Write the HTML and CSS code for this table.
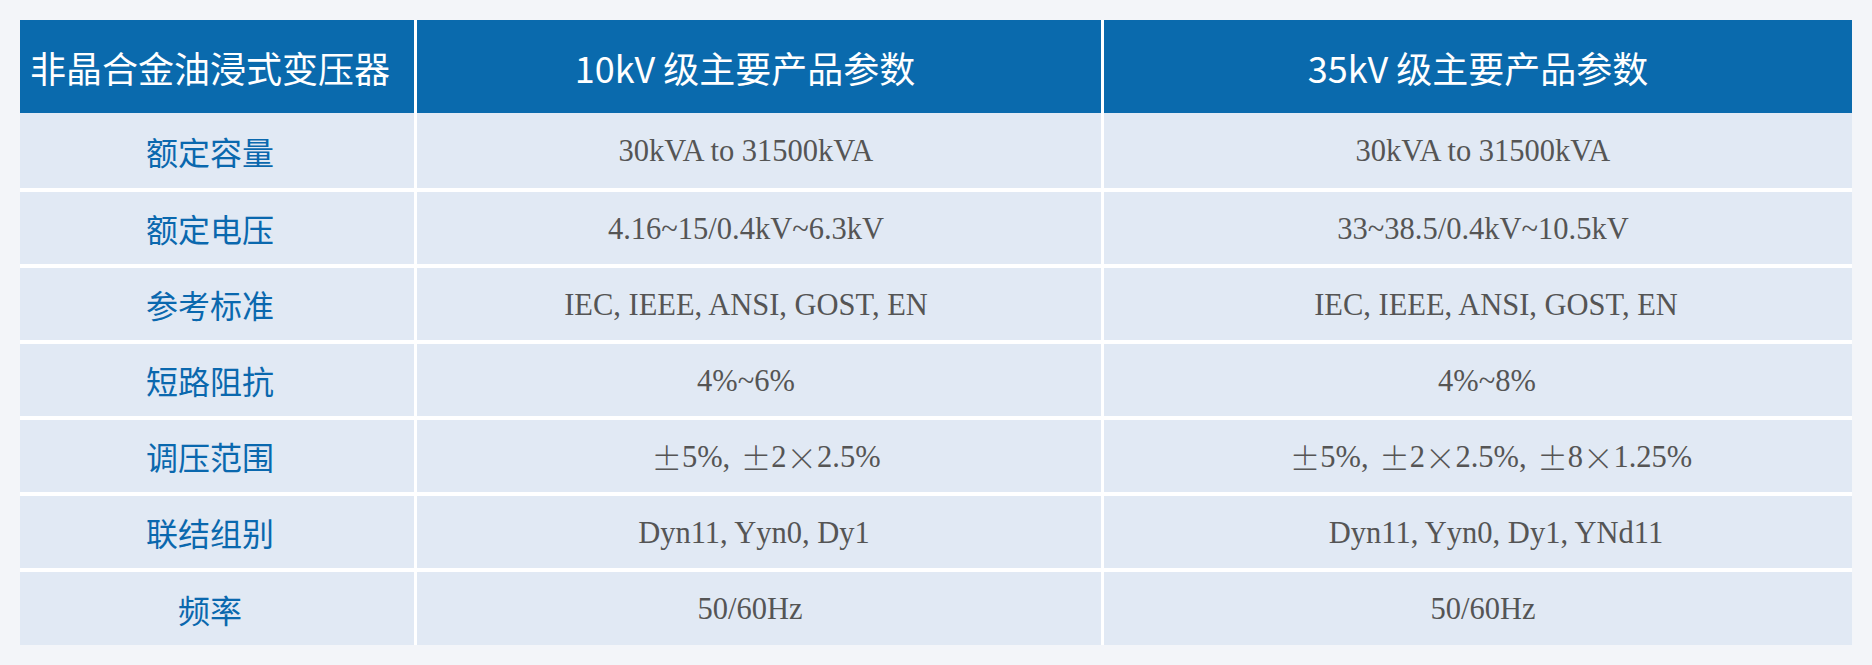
FILE: index.html
```html
<!DOCTYPE html>
<html lang="zh-CN">
<head>
<meta charset="utf-8">
<title>非晶合金油浸式变压器</title>
<link rel="stylesheet" href="styles.css">
</head>
<body>
<div class="page">
  <div class="table">
    <div class="row head">
      <div class="cell c1">非晶合金油浸式变压器</div>
      <div class="cell c2">10kV 级主要产品参数</div>
      <div class="cell c3">35kV 级主要产品参数</div>
    </div>
    <div class="row first">
      <div class="cell c1 label">额定容量</div>
      <div class="cell c2 val">30kVA to 31500kVA</div>
      <div class="cell c3 val">30kVA to 31500kVA</div>
    </div>
    <div class="row">
      <div class="cell c1 label">额定电压</div>
      <div class="cell c2 val">4.16~15/0.4kV~6.3kV</div>
      <div class="cell c3 val">33~38.5/0.4kV~10.5kV</div>
    </div>
    <div class="row">
      <div class="cell c1 label">参考标准</div>
      <div class="cell c2 val">IEC, IEEE, ANSI, GOST, EN</div>
      <div class="cell c3 val indent-l">IEC, IEEE, ANSI, GOST, EN</div>
    </div>
    <div class="row">
      <div class="cell c1 label">短路阻抗</div>
      <div class="cell c2 val">4%~6%</div>
      <div class="cell c3 val indent-s">4%~8%</div>
    </div>
    <div class="row">
      <div class="cell c1 label">调压范围</div>
      <div class="cell c2 val indent-xl"><span class="sym">±</span>5%, <span class="sym pm">±</span>2<span class="sym">×</span>2.5%</div>
      <div class="cell c3 val indent-m"><span class="sym">±</span>5%, <span class="sym pm">±</span>2<span class="sym">×</span>2.5%, <span class="sym pm">±</span>8<span class="sym">×</span>1.25%</div>
    </div>
    <div class="row">
      <div class="cell c1 label">联结组别</div>
      <div class="cell c2 val indent-m">Dyn11, Yyn0, Dy1</div>
      <div class="cell c3 val indent-l">Dyn11, Yyn0, Dy1, YNd11</div>
    </div>
    <div class="row last">
      <div class="cell c1 label">频率</div>
      <div class="cell c2 val indent-s">50/60Hz</div>
      <div class="cell c3 val">50/60Hz</div>
    </div>
  </div>
</div>
</body>
</html>
```

FILE: styles.css
```css
html, body {
  margin: 0;
  padding: 0;
  background: #f3f5f9;
}

.page {
  padding: 20px;
}

.table {
  width: 1832px;
  background: #ffffff;
  display: flex;
  flex-direction: column;
}

.row {
  display: grid;
  grid-template-columns: 394px 684px 1fr;
  column-gap: 3px;
  height: 72px;
  margin-top: 4px;
}

.row.head {
  height: 93px;
  margin-top: 0;
}

.row.first {
  height: 75px;
  margin-top: 0;
}

.row.last {
  height: 73px;
}

.cell {
  display: flex;
  align-items: center;
  justify-content: center;
  background: #e1e9f4;
  white-space: pre;
}

.head .cell {
  background: #0a6aad;
  color: #ffffff;
  font-family: "Noto Sans CJK SC", "Noto Sans", sans-serif;
  font-size: 36px;
  font-weight: 400;
}

.c1 {
  padding-right: 14px;
}

.c2 {
  padding-right: 26px;
}

.c3 {
  padding-left: 10px;
}

.head .c3 {
  padding-left: 0;
}

.head .c2 {
  padding-right: 28px;
}

.label {
  color: #0a68ae;
  font-family: "Noto Sans CJK SC", "Noto Sans", sans-serif;
  font-size: 32px;
}

.val {
  color: #555555;
  font-family: "Liberation Serif", "Noto Sans CJK SC", serif;
  font-size: 30.5px;
  padding-top: 2px;
}

.c2.indent-s { padding-left: 8px; }
.c2.indent-m { padding-left: 16px; }
.c2.indent-xl { padding-left: 40px; }
.c3.indent-s { padding-left: 18px; }
.c3.indent-m { padding-left: 26px; }
.c3.indent-l { padding-left: 36px; }

.sym {
  font-family: "Noto Sans CJK SC", sans-serif;
  font-weight: 300;
}

.sym.pm {
  margin-left: 3px;
}
```
